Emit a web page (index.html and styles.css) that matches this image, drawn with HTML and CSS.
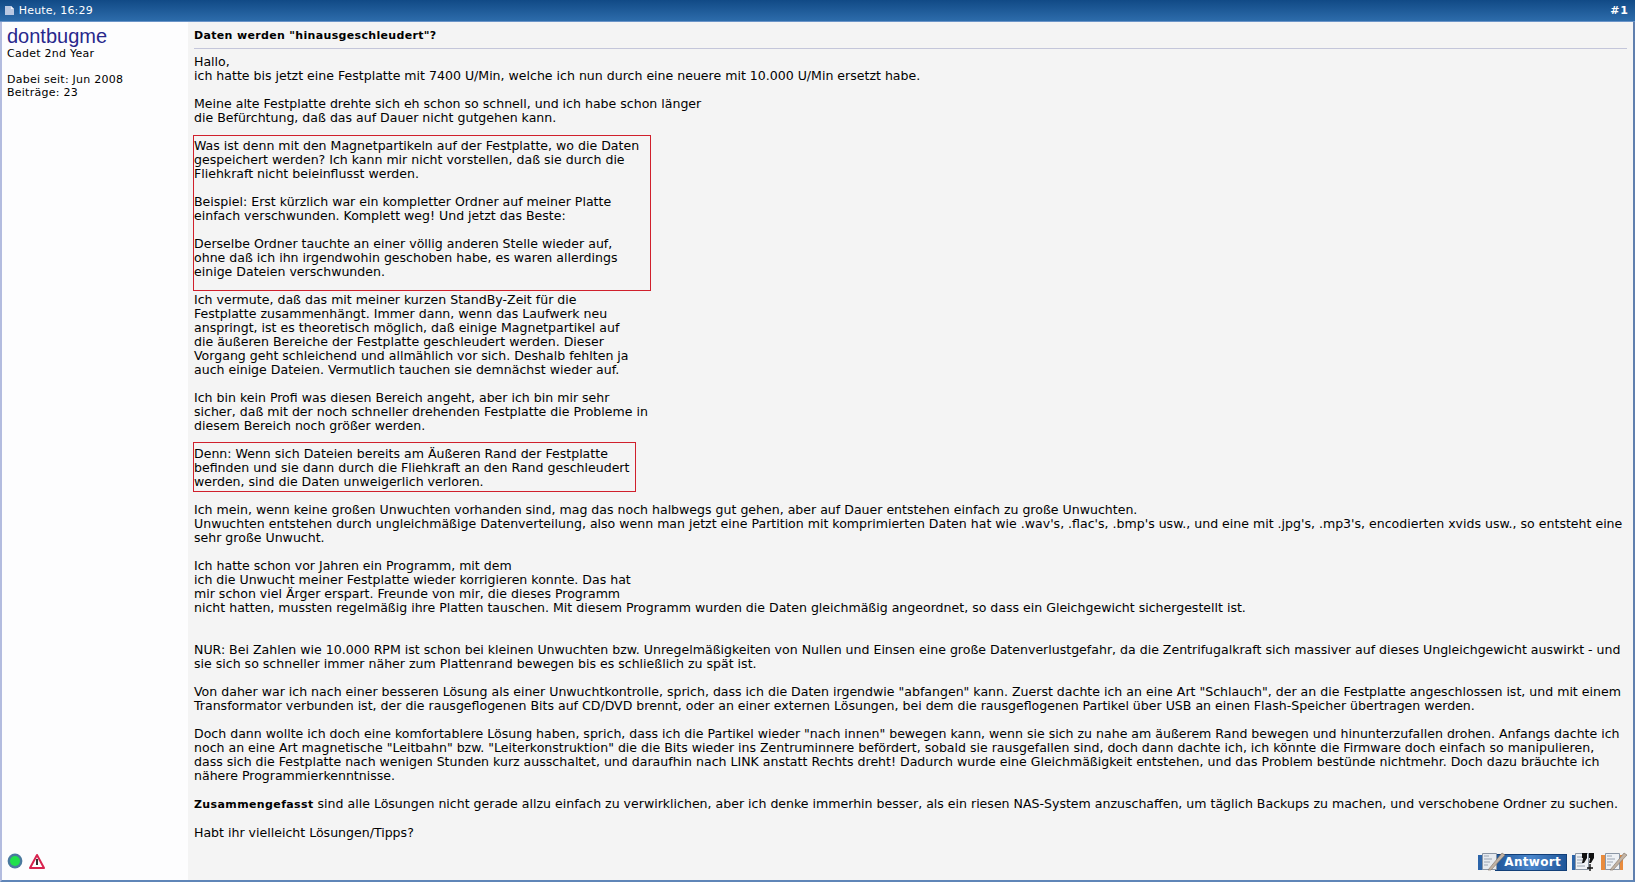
FILE: index.html
```html
<!DOCTYPE html>
<html lang="de">
<head>
    <meta charset="UTF-8">
    <title>Daten werden "hinausgeschleudert"?</title>
    <link rel="stylesheet" href="styles.css">
</head>
<body>
    <div class="post">
        <div class="post-head">
            <span class="post-date">
                <svg class="page-icon" width="10" height="11" viewBox="0 0 10 11"><path d="M0 1h6l3 3v6H0z" fill="#b9c8e2"/><path d="M6 1l3 3H6z" fill="#eef2fa"/></svg>
                Heute, 16:29
            </span>
            <span class="post-num">#1</span>
        </div>
        <div class="post-main">
            <div class="user-col">
                <div class="user-name">dontbugme</div>
                <div class="user-rank">Cadet 2nd Year</div>
                <div class="user-info">Dabei seit: Jun 2008<br>Beiträge: 23</div>
            </div>
            <div class="msg-col">
                <div class="msg-title">Daten werden "hinausgeschleudert"?</div>
                <div class="msg-body">
                    Hallo,<br>
                    ich hatte bis jetzt eine Festplatte mit 7400 U/Min, welche ich nun durch eine neuere mit 10.000 U/Min ersetzt habe.<br>
                    <br>
                    Meine alte Festplatte drehte sich eh schon so schnell, und ich habe schon länger<br>
                    die Befürchtung, daß das auf Dauer nicht gutgehen kann.<br>
                    <div class="mark mark-a">
                        Was ist denn mit den Magnetpartikeln auf der Festplatte, wo die Daten<br>
                        gespeichert werden? Ich kann mir nicht vorstellen, daß sie durch die<br>
                        Fliehkraft nicht beieinflusst werden.<br>
                        <br>
                        Beispiel: Erst kürzlich war ein kompletter Ordner auf meiner Platte<br>
                        einfach verschwunden. Komplett weg! Und jetzt das Beste:<br>
                        <br>
                        Derselbe Ordner tauchte an einer völlig anderen Stelle wieder auf,<br>
                        ohne daß ich ihn irgendwohin geschoben habe, es waren allerdings<br>
                        einige Dateien verschwunden.
                    </div>
                    Ich vermute, daß das mit meiner kurzen StandBy-Zeit für die<br>
                    Festplatte zusammenhängt. Immer dann, wenn das Laufwerk neu<br>
                    anspringt, ist es theoretisch möglich, daß einige Magnetpartikel auf<br>
                    die äußeren Bereiche der Festplatte geschleudert werden. Dieser<br>
                    Vorgang geht schleichend und allmählich vor sich. Deshalb fehlten ja<br>
                    auch einige Dateien. Vermutlich tauchen sie demnächst wieder auf.<br>
                    <br>
                    Ich bin kein Profi was diesen Bereich angeht, aber ich bin mir sehr<br>
                    sicher, daß mit der noch schneller drehenden Festplatte die Probleme in<br>
                    diesem Bereich noch größer werden.<br>
                    <div class="mark mark-b">
                        Denn: Wenn sich Dateien bereits am Äußeren Rand der Festplatte<br>
                        befinden und sie dann durch die Fliehkraft an den Rand geschleudert<br>
                        werden, sind die Daten unweigerlich verloren.
                    </div>
                    Ich mein, wenn keine großen Unwuchten vorhanden sind, mag das noch halbwegs gut gehen, aber auf Dauer entstehen einfach zu große Unwuchten.<br>
                    Unwuchten entstehen durch ungleichmäßige Datenverteilung, also wenn man jetzt eine Partition mit komprimierten Daten hat wie .wav's, .flac's, .bmp's usw., und eine mit .jpg's, .mp3's, encodierten xvids usw., so entsteht eine<br>
                    sehr große Unwucht.<br>
                    <br>
                    Ich hatte schon vor Jahren ein Programm, mit dem<br>
                    ich die Unwucht meiner Festplatte wieder korrigieren konnte. Das hat<br>
                    mir schon viel Ärger erspart. Freunde von mir, die dieses Programm<br>
                    nicht hatten, mussten regelmäßig ihre Platten tauschen. Mit diesem Programm wurden die Daten gleichmäßig angeordnet, so dass ein Gleichgewicht sichergestellt ist.<br>
                    <br>
                    <br>
                    NUR: Bei Zahlen wie 10.000 RPM ist schon bei kleinen Unwuchten bzw. Unregelmäßigkeiten von Nullen und Einsen eine große Datenverlustgefahr, da die Zentrifugalkraft sich massiver auf dieses Ungleichgewicht auswirkt - und<br>
                    sie sich so schneller immer näher zum Plattenrand bewegen bis es schließlich zu spät ist.<br>
                    <br>
                    Von daher war ich nach einer besseren Lösung als einer Unwuchtkontrolle, sprich, dass ich die Daten irgendwie "abfangen" kann. Zuerst dachte ich an eine Art "Schlauch", der an die Festplatte angeschlossen ist, und mit einem<br>
                    Transformator verbunden ist, der die rausgeflogenen Bits auf CD/DVD brennt, oder an einer externen Lösungen, bei dem die rausgeflogenen Partikel über USB an einen Flash-Speicher übertragen werden.<br>
                    <br>
                    Doch dann wollte ich doch eine komfortablere Lösung haben, sprich, dass ich die Partikel wieder "nach innen" bewegen kann, wenn sie sich zu nahe am äußerem Rand bewegen und hinunterzufallen drohen. Anfangs dachte ich<br>
                    noch an eine Art magnetische "Leitbahn" bzw. "Leiterkonstruktion" die die Bits wieder ins Zentruminnere befördert, sobald sie rausgefallen sind, doch dann dachte ich, ich könnte die Firmware doch einfach so manipulieren,<br>
                    dass sich die Festplatte nach wenigen Stunden kurz ausschaltet, und daraufhin nach LINK anstatt Rechts dreht! Dadurch wurde eine Gleichmäßigkeit entstehen, und das Problem bestünde nichtmehr. Doch dazu bräuchte ich<br>
                    nähere Programmierkenntnisse.<br>
                    <br>
                    <b>Zusammengefasst</b> sind alle Lösungen nicht gerade allzu einfach zu verwirklichen, aber ich denke immerhin besser, als ein riesen NAS-System anzuschaffen, um täglich Backups zu machen, und verschobene Ordner zu suchen.<br>
                    <br>
                    Habt ihr vielleicht Lösungen/Tipps?
                </div>
            </div>
        </div>
        <div class="post-foot">
            <div class="foot-left">
                <svg width="16" height="16" viewBox="0 0 16 16"><circle cx="8" cy="8" r="7.4" fill="#4a7a9e"/><circle cx="8" cy="8" r="5" fill="#20e04c"/></svg>
                <svg width="16" height="17" viewBox="0 0 16 17"><path d="M8 2L15 15H1z" fill="#fff" stroke="#d8244f" stroke-width="2" stroke-linejoin="round"/><path d="M8 6v6" stroke="#333" stroke-width="2"/></svg>
            </div>
            <div class="foot-right">
                <span class="btn-reply">
                    <svg class="btn-icon" width="28" height="20" viewBox="0 0 28 20"><rect x="0" y="3" width="14" height="15" fill="#2b64a9"/><path d="M4.500 1.500h14v16h-14z" fill="#e6eaef" stroke="#8b96a5"/><path d="M6 4h5M6 7h8M6 10h6M6 13h4" stroke="#9aa4b2"/><path d="M10 18L24 1l3 2-14 15z" fill="#c2b3a4" stroke="#7c7064" stroke-width=".6"/></svg>
                    <span class="btn-label">Antwort</span>
                </span>
                <svg width="24" height="20" viewBox="0 0 24 20"><rect x="0" y="3" width="7" height="15" fill="#2b64a9"/><path d="M3.500 1.500h13v16h-13z" fill="#eef1f5" stroke="#8b96a5"/><path d="M5 5h5M5 8h5M5 11h6M5 14h8" stroke="#9aa4b2"/><path d="M10 1h5v5l-3 5h-2l1-5h-1zM17 1h5v5l-3 5h-2l1-5h-1z" fill="#111"/><path d="M18 12v7M15 16h6" stroke="#111" stroke-width="1.4"/></svg>
                <svg width="27" height="20" viewBox="0 0 27 20"><rect x="0" y="3" width="22" height="15" fill="#e98b3d"/><path d="M4.500 1.500h14v16h-14z" fill="#eef1f5" stroke="#8b96a5"/><path d="M6 4h5M6 7h8M6 10h6M6 13h4" stroke="#9aa4b2"/><path d="M9 18L23 1l3 2-14 15z" fill="#c2b3a4" stroke="#7c7064" stroke-width=".6"/></svg>
            </div>
        </div>
    </div>
</body>
</html>
```

FILE: styles.css
```css
html, body {
    margin: 0;
    padding: 0;
    height: 100%;
}
body {
    font-family: 'DejaVu Sans', Verdana, sans-serif;
    font-size: 12.55px;
    line-height: 14px;
    color: #000;
    background-color: #fff;
    overflow: hidden;
}
b {
    font-size: 11px;
    letter-spacing: 0.38px;
}
.post {
    height: 882px;
    margin-right: 2px;
    box-sizing: border-box;
    display: flex;
    flex-direction: column;
    background-color: #f4f4f4;
    border-left: 2px solid #b3bcdf;
    border-right: 2px solid #5f7fae;
    border-bottom: 2px solid #5f86b8;
}
.post-head {
    height: 22px;
    flex: none;
    margin: 0 -2px;
    padding: 0 6px 0 5px;
    display: flex;
    justify-content: space-between;
    align-items: center;
    color: #fff;
    font-size: 11px;
    background: linear-gradient(#114a86, #2d6cab);
    border-bottom: 1px solid #6a94c8;
    box-sizing: border-box;
}
.post-date {
    letter-spacing: 0.2px;
}
.page-icon {
    vertical-align: -2px;
}
.post-num {
    font-weight: bold;
    letter-spacing: 1px;
}
.post-main {
    flex: 1;
    display: flex;
    min-height: 0;
}
.user-col {
    width: 186px;
    flex: none;
    padding: 4px 0 0 5px;
    box-sizing: border-box;
    background-color: #fdfdfe;
    font-size: 11px;
    line-height: 13px;
    letter-spacing: 0.25px;
}
.user-name {
    font-family: 'Liberation Sans', Arial, sans-serif;
    font-size: 20px;
    line-height: 21px;
    letter-spacing: 0;
    color: #28288c;
}
.user-info {
    margin-top: 13px;
}
.msg-col {
    flex: 1;
    padding: 7px 6px 0 6px;
    white-space: nowrap;
}
.msg-title {
    font-weight: bold;
    font-size: 11px;
    letter-spacing: 0.33px;
    line-height: 13px;
    padding-bottom: 6px;
    border-bottom: 1px solid #c4c6da;
    margin-bottom: 6px;
}
.mark {
    border: 1px solid #d0202c;
    width: fit-content;
}
.mark-a {
    margin: 10px 0 2px -1px;
    padding: 3px 11px 11px 0;
}
.mark-b {
    margin: 9px 0 11px -1px;
    padding: 4px 6px 2px 0;
}
.post-foot {
    height: 36px;
    flex: none;
    display: flex;
    justify-content: space-between;
    align-items: flex-start;
    padding-top: 8px;
    box-sizing: border-box;
    background: linear-gradient(to right, #fdfdfe 186px, #f4f4f4 186px);
}
.foot-left {
    display: flex;
    gap: 6px;
    margin-top: 1px;
    padding-left: 5px;
}
.foot-right {
    display: flex;
    align-items: center;
    gap: 5px;
    padding-right: 5px;
}
.btn-reply {
    display: flex;
    align-items: center;
}
.btn-icon {
    position: relative;
    z-index: 1;
}
.btn-label {
    margin-left: -11px;
    padding: 0 5px 0 8px;
    background: linear-gradient(to right, #1f5699, #4a86cc 50%, #1f5699);
    color: #fff;
    font-weight: bold;
    font-size: 12px;
    line-height: 15px;
    letter-spacing: 0.3px;
    border: 1px solid #123f78;
}
```
